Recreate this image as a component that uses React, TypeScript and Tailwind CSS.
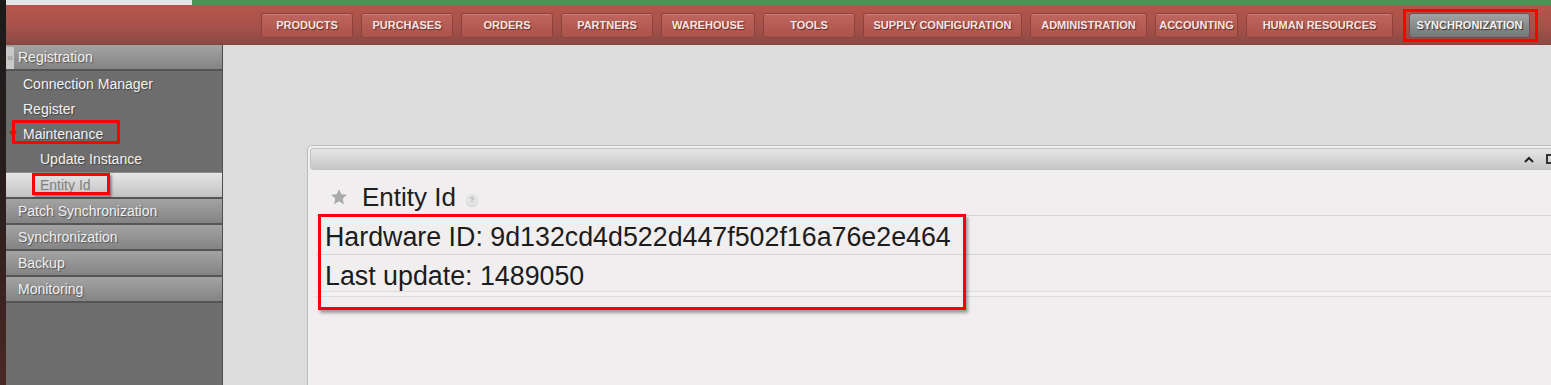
const FONT = "font-['Liberation_Sans',Arial,sans-serif]";

const NAV = [
  { label: 'PRODUCTS', w: 'w-[92px]' },
  { label: 'PURCHASES', w: 'w-[92px]' },
  { label: 'ORDERS', w: 'w-[92px]' },
  { label: 'PARTNERS', w: 'w-[92px]' },
  { label: 'WAREHOUSE', w: 'w-[94px]' },
  { label: 'TOOLS', w: 'w-[92px]' },
  { label: 'SUPPLY CONFIGURATION', w: 'w-[159px]' },
  { label: 'ADMINISTRATION', w: 'w-[117px]' },
  { label: 'ACCOUNTING', w: 'w-[83px]' },
  { label: 'HUMAN RESOURCES', w: 'w-[147px]' },
];

function SectionHeader({ label, lead }: { label: string; lead?: boolean }) {
  return (
    <div className="flex h-[26px] items-center border-b-2 border-[#555] bg-gradient-to-b from-[#a3a3a3] to-[#848484] pt-[1px] text-[14px] text-[#f0f0f0] [text-shadow:1px_1px_1px_#555]">
      {lead ? (
        <span className="flex h-[22px] w-[8px] items-center justify-center bg-[#c9c9c9] text-[11px] leading-none text-[#8a8a8a] [text-shadow:none]">
          «
        </span>
      ) : (
        <span className="w-[8px]" />
      )}
      <span className="ml-[4px]">{label}</span>
    </div>
  );
}

function Item({ label, sub, h = 'h-[25px]' }: { label: string; sub?: boolean; h?: string }) {
  return (
    <div
      className={`flex ${h} items-center pt-[1px] text-[14px] text-[#f2f2f2] [text-shadow:1px_1px_1px_#444] ${
        sub ? 'pl-[34px]' : 'pl-[17px]'
      }`}
    >
      {label}
    </div>
  );
}

export default function App() {
  return (
    <div className={`flex h-[385px] w-[1551px] overflow-hidden ${FONT}`}>
      {/* dark strip on the far left */}
      <div className="w-[6px] shrink-0 bg-gradient-to-b from-[#1b1b1b] via-[#2a1e1d] to-[#4a2825]" />

      <div className="flex min-w-0 flex-1 flex-col">
        {/* top strip */}
        <div className="flex h-[5px] shrink-0">
          <div className="w-[186px] bg-[#e4e4e4]" />
          <div className="flex-1 bg-[#558f55]" />
        </div>

        {/* red menu bar */}
        <div className="flex h-[40px] shrink-0 items-center gap-[8px] border-b border-[#7e4640] bg-gradient-to-b from-[#b5564c] via-[#a8524a] to-[#8e4943] pl-[255px] pt-[1px]">
          {NAV.map((n) => (
            <div
              key={n.label}
              className={`flex h-[25px] ${n.w} shrink-0 items-center justify-center rounded-[3px] border border-[#8f413b] bg-gradient-to-b from-[#bf655d] to-[#ab544c] text-[11px] font-bold text-[#f3e6e4] shadow-[inset_0_1px_0_rgba(255,255,255,0.18)] [text-shadow:1px_1px_1px_#6a2a25]`}
            >
              {n.label}
            </div>
          ))}
          <div className="relative ml-[8px] flex h-[25px] w-[121px] shrink-0 items-center justify-center rounded-[3px] border border-[#5a5a5a] bg-gradient-to-b from-[#a2a2a2] to-[#767676] text-[11px] font-bold text-[#f4f4f4] [text-shadow:1px_1px_1px_#333]">
            SYNCHRONIZATION
            <div className="absolute left-[-7px] top-[-5px] h-[33px] w-[135px] border-[3px] border-[#ff0000]" />
          </div>
        </div>

        <div className="flex min-h-0 flex-1">
          {/* sidebar */}
          <aside className="w-[217px] shrink-0 border-r border-[#4f4f4f] bg-[#6d6d6d]">
            <SectionHeader label="Registration" lead />
            <Item label="Connection Manager" />
            <Item label="Register" />
            <div className="relative flex h-[25px] items-center pl-[2px] pt-[1px] text-[14px] text-[#f2f2f2] [text-shadow:1px_1px_1px_#444]">
              <svg width="15" height="8" viewBox="0 0 15 8" className="shrink-0">
                <path d="M1 1 L9 1 L5 7 Z" fill="#5b4444" />
              </svg>
              <span>Maintenance</span>
              <div className="absolute left-[6px] top-[-1px] h-[24px] w-[108px] border-[3px] border-[#ff0000]" />
            </div>
            <Item label="Update Instance" sub h="h-[26px]" />
            <div className="relative flex h-[27px] items-center border-t border-b-2 border-t-[#8a8a8a] border-b-[#555] bg-gradient-to-b from-[#e6e6e6] to-[#c2c2c2] pl-[34px] text-[14px] text-[#7f7f7f]">
              Entity Id
              <div className="absolute left-[26px] top-[0px] h-[22px] w-[78px] border-[3px] border-[#ff0000] shadow-[2px_2px_2px_rgba(0,0,0,0.35)]" />
            </div>
            <SectionHeader label="Patch Synchronization" />
            <SectionHeader label="Synchronization" />
            <SectionHeader label="Backup" />
            <SectionHeader label="Monitoring" />
          </aside>

          {/* content */}
          <main className="min-w-0 flex-1 overflow-hidden bg-[#dcdcdc] pl-[84px] pt-[100px]">
            <div className="relative h-[300px] w-[1262px] rounded-tl-[5px] border border-[#bdbdbd] bg-[#f0eeef] p-[2px]">
              <div className="flex h-[22px] items-center justify-end gap-[12px] rounded-[3px] border border-[#c2c2c2] bg-gradient-to-b from-[#e6e6e6] to-[#c6c6c6] pr-[9px]">
                <svg width="10" height="7" viewBox="0 0 10 7">
                  <path d="M1 6 L5 2 L9 6" fill="none" stroke="#222" strokeWidth="2" />
                </svg>
                <div className="h-[10px] w-[10px] border-2 border-[#333]" />
              </div>

              <div className="flex h-[45px] items-center pl-[20px] pt-[9px]">
                <svg width="18" height="18" viewBox="0 0 24 24" className="shrink-0">
                  <path
                    d="M12 1.5 L15.1 8.3 L22.5 9.1 L17 14.1 L18.5 21.5 L12 17.7 L5.5 21.5 L7 14.1 L1.5 9.1 L8.9 8.3 Z"
                    fill="#a9a9a9"
                  />
                </svg>
                <span className="ml-[14px] text-[26px] leading-none text-[#1e1e1e]">Entity Id</span>
                <span className="ml-[10px] mt-[6px] flex h-[12px] w-[12px] items-center justify-center rounded-full bg-[#e4e4e4] text-[8px] font-bold text-[#b0b0b0] shadow-[0_1px_1px_rgba(0,0,0,0.15)]">
                  ?
                </span>
              </div>

              <div className="ml-[6px]">
                <div className="flex h-[39px] items-center border-t border-[#d6d6d6] pl-[9px] pt-[5px] text-[26.8px] leading-none text-[#1c1c1c]">
                  Hardware ID: 9d132cd4d522d447f502f16a76e2e464
                </div>
                <div className="flex h-[37px] items-center border-t border-[#d6d6d6] pl-[9px] pt-[6px] text-[26.8px] leading-none text-[#1c1c1c]">
                  Last update: 1489050
                </div>
                <div className="h-[6px] border-y border-[#dcdcdc] bg-[#f3f1f2]" />
              </div>

              <div className="absolute left-[10px] top-[68px] h-[96px] w-[648px] border-[3px] border-[#ff0000] shadow-[2px_3px_3px_rgba(0,0,0,0.35)]" />
            </div>
          </main>
        </div>
      </div>
    </div>
  );
}
